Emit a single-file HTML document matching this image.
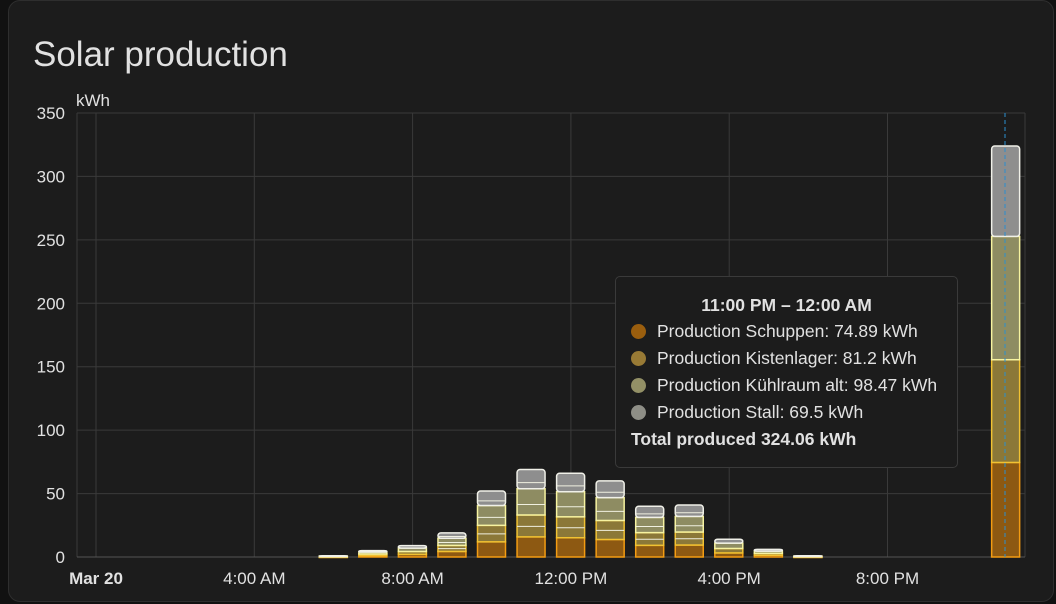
<!DOCTYPE html>
<html><head><meta charset="utf-8"><style>
html,body{margin:0;padding:0;background:#111;width:1056px;height:604px;overflow:hidden;font-family:"Liberation Sans",sans-serif}
.card{position:absolute;left:8px;top:0;width:1046px;height:602px;background:#1c1c1c;border:1px solid #2e2e2e;border-radius:12px;box-sizing:border-box}
h1{position:absolute;left:33px;top:35px;margin:0;font-weight:400;font-size:35px;color:#e1e1e1;letter-spacing:0}
.tip{position:absolute;left:615px;top:276px;width:343px;height:192px;box-sizing:border-box;background:#1c1c1c;border:1px solid #3a3a3a;border-radius:5px;color:#e1e1e1;font-size:17.5px}
.tip .t{position:absolute;top:18px;width:100%;text-align:center;font-weight:bold}
.row{position:absolute;left:15px;white-space:nowrap}
.dot{display:inline-block;width:15px;height:15px;border-radius:50%;vertical-align:-2px;margin-right:11px}
</style></head><body>
<div class="card"></div>
<h1>Solar production</h1>
<svg id="s" width="1056" height="604" style="position:absolute;left:0;top:0" font-family="Liberation Sans, sans-serif"></svg>
<div class="tip">
<div class="t">11:00 PM – 12:00 AM</div>
<div class="row" style="top:44px"><span class="dot" style="background:#9a5e0e"></span>Production Schuppen: 74.89 kWh</div>
<div class="row" style="top:71px"><span class="dot" style="background:#987a35"></span>Production Kistenlager: 81.2 kWh</div>
<div class="row" style="top:98px"><span class="dot" style="background:#939066"></span>Production Kühlraum alt: 98.47 kWh</div>
<div class="row" style="top:125px"><span class="dot" style="background:#8e8e86"></span>Production Stall: 69.5 kWh</div>
<div class="row" style="top:152px;font-weight:bold">Total produced 324.06 kWh</div>
</div>
<script>
var s='';
var y0=557,sc=444/350;
for(var i=0;i<=7;i++){var y=y0-i*63.43;s+='<line x1="77" x2="1025" y1="'+y+'" y2="'+y+'" stroke="#3a3a3a"/>';
s+='<text x="65" y="'+(y+6)+'" fill="#e1e1e1" font-size="17" text-anchor="end">'+(i*50)+'</text>';}
s+='<line x1="77" x2="77" y1="113" y2="557" stroke="#3a3a3a"/><line x1="1025" x2="1025" y1="113" y2="557" stroke="#3a3a3a"/>';
var lab=['Mar 20','4:00 AM','8:00 AM','12:00 PM','4:00 PM','8:00 PM'];
for(var k=0;k<6;k++){var x=96+158.3*k;s+='<line x1="'+x+'" x2="'+x+'" y1="113" y2="557" stroke="#3a3a3a"/>';
s+='<text x="'+x+'" y="584" fill="#e1e1e1" font-size="17" text-anchor="middle"'+(k==0?' font-weight="bold"':'')+'>'+lab[k]+'</text>';}
s+='<line x1="77" x2="1025" y1="557" y2="557" stroke="#555"/>';
s+='<text x="76" y="106" fill="#e1e1e1" font-size="17">kWh</text>';
var bars=[[6,1],[7,5],[8,9],[9,19],[10,52],[11,69],[12,66],[13,60],[14,40],[15,41],[16,14],[17,6],[18,1],[23,324]];
var fr=[.23,.25,.30,.22];
var fills=['#8d5912','#8b7838','#8e8c62','#8e8e8e'];
var strokes=['#f39c12','#f1c232','#f7f3a0','#f0f0e8'];
bars.forEach(function(b){var cx=96+39.55*b[0],h=b[1]*sc,y=y0;
 for(var j=0;j<4;j++){var hh=h*fr[j];y-=hh;
  s+='<rect x="'+(cx-14)+'" y="'+y+'" width="28" height="'+Math.max(hh,0.8)+'" fill="'+fills[j]+'" stroke="'+strokes[j]+'" stroke-width="1.5"'+(j==3?' rx="3"':'')+'/>';}
 if(b[0]<23 && h>20){for(var m=1;m<4;m++){var yy=y0-h*(m/4+0.1);s+='<line x1="'+(cx-14)+'" x2="'+(cx+14)+'" y1="'+yy+'" y2="'+yy+'" stroke="#f0f0e0" stroke-width="1"/>';}}
});
s+='<line x1="1005" x2="1005" y1="113" y2="557" stroke="#2a8fd0" stroke-width="1" stroke-dasharray="4,3"/>';
document.getElementById('s').innerHTML=s;
</script>
</body></html>
